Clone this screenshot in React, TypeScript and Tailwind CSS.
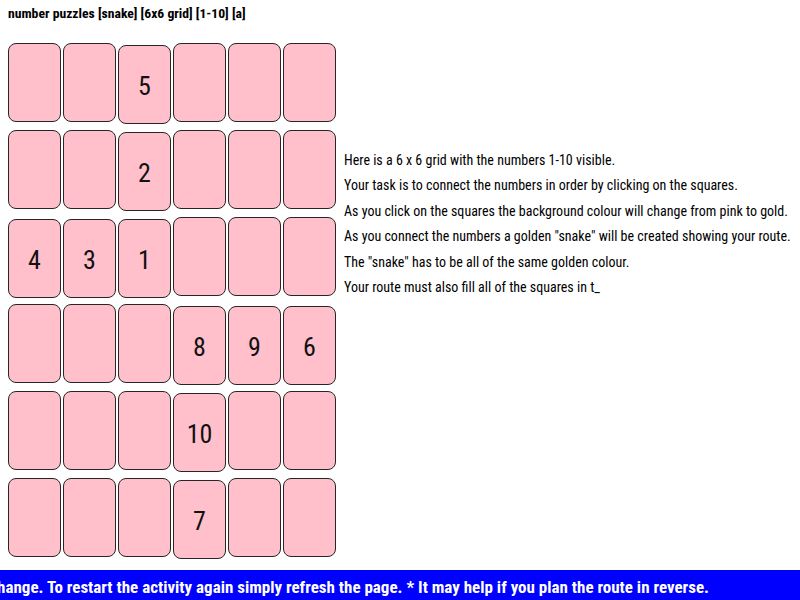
const grid: (number | null)[][] = [
  [null, null, 5, null, null, null],
  [null, null, 2, null, null, null],
  [4, 3, 1, null, null, null],
  [null, null, null, 8, 9, 6],
  [null, null, null, 10, null, null],
  [null, null, null, 7, null, null],
];

const lines = [
  'Here is a 6 x 6 grid with the numbers 1-10 visible.',
  'Your task is to connect the numbers in order by clicking on the squares.',
  'As you click on the squares the background colour will change from pink to gold.',
  'As you connect the numbers a golden "snake" will be created showing your route.',
  'The "snake" has to be all of the same golden colour.',
  'Your route must also fill all of the squares in t_',
];

function Cell({ n }: { n: number | null }) {
  return (
    <div
      className={
        'w-[53px] h-[79px] shrink-0 rounded-[8px] border-[1.5px] border-[#262626] bg-[#ffc0cb] flex items-center justify-center pt-[3px] text-[26px] leading-none text-[#111]' +
        (n !== null ? ' mt-[2px]' : '')
      }
    >
      {n}
    </div>
  );
}

export default function App() {
  return (
    <div className="w-[800px] h-[600px] bg-white overflow-hidden flex flex-col font-['Roboto_Condensed',sans-serif]">
      <div className="h-[43px] pl-2 pt-[5px] text-[13.7px] leading-[16px] font-bold text-black">
        number puzzles [snake] [6x6 grid] [1-10] [a]
      </div>
      <div className="flex items-start pl-2">
        <div className="flex flex-col gap-y-[8px]">
          {grid.map((row, r) => (
            <div key={r} className="flex items-start gap-x-[2px] h-[79px]">
              {row.map((n, c) => (
                <Cell key={c} n={n} />
              ))}
            </div>
          ))}
        </div>
        <div className="ml-2 mt-[105px] text-[14px] leading-[25.4px] text-black whitespace-nowrap">
          {lines.map((l) => (
            <div key={l}>{l}</div>
          ))}
        </div>
      </div>
      <div className="mt-[13px] h-[30px] bg-[#0000ff] overflow-hidden flex justify-end items-center pr-[91px] pt-[4px]">
        <span className="shrink-0 whitespace-nowrap text-white font-bold text-[17px] leading-none">
          The background colour of each square you click will change. To restart the activity again simply refresh the page. * It may help if you plan the route in reverse.
        </span>
      </div>
    </div>
  );
}
